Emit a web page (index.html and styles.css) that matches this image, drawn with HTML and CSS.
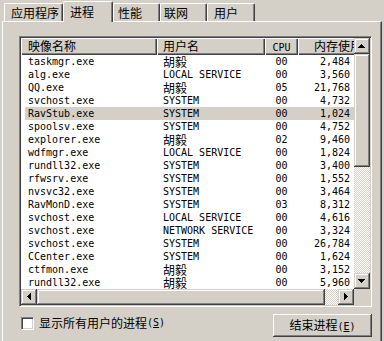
FILE: index.html
```html
<!DOCTYPE html>
<html lang="zh-CN">
  <head>
    <meta charset="UTF-8" />
    <meta name="viewport" content="width=device-width, initial-scale=1.0" />
    <title>Windows 任务管理器</title>
    <link rel="stylesheet" href="styles.css">
  </head>
  <body>
    <div class="tabs">
      <div class="tab tab-apps">应用程序</div>
      <div class="tab tab-proc active">进程</div>
      <div class="tab tab-perf">性能</div>
      <div class="tab tab-net">联网</div>
      <div class="tab tab-user">用户</div>
    </div>

    <div class="panel">
      <div class="list">
        <div class="list-main">
          <div class="view">
            <div class="head">
              <div class="col">映像名称</div>
              <div class="col">用户名</div>
              <div class="col col-cpu"><span class="en">CPU</span></div>
              <div class="col col-mem">内存使用</div>
            </div>
            <div class="row"><span class="name">taskmgr.exe</span><span class="user cn">胡毅</span><span class="cpu">00</span><span class="mem">2,484</span></div>
            <div class="row"><span class="name">alg.exe</span><span class="user">LOCAL SERVICE</span><span class="cpu">00</span><span class="mem">3,560</span></div>
            <div class="row"><span class="name">QQ.exe</span><span class="user cn">胡毅</span><span class="cpu">05</span><span class="mem">21,768</span></div>
            <div class="row"><span class="name">svchost.exe</span><span class="user">SYSTEM</span><span class="cpu">00</span><span class="mem">4,732</span></div>
            <div class="row sel"><span class="name">RavStub.exe</span><span class="user">SYSTEM</span><span class="cpu">00</span><span class="mem">1,024</span></div>
            <div class="row"><span class="name">spoolsv.exe</span><span class="user">SYSTEM</span><span class="cpu">00</span><span class="mem">4,752</span></div>
            <div class="row"><span class="name">explorer.exe</span><span class="user cn">胡毅</span><span class="cpu">02</span><span class="mem">9,460</span></div>
            <div class="row"><span class="name">wdfmgr.exe</span><span class="user">LOCAL SERVICE</span><span class="cpu">00</span><span class="mem">1,824</span></div>
            <div class="row"><span class="name">rundll32.exe</span><span class="user">SYSTEM</span><span class="cpu">00</span><span class="mem">3,400</span></div>
            <div class="row"><span class="name">rfwsrv.exe</span><span class="user">SYSTEM</span><span class="cpu">00</span><span class="mem">1,552</span></div>
            <div class="row"><span class="name">nvsvc32.exe</span><span class="user">SYSTEM</span><span class="cpu">00</span><span class="mem">3,464</span></div>
            <div class="row"><span class="name">RavMonD.exe</span><span class="user">SYSTEM</span><span class="cpu">03</span><span class="mem">8,312</span></div>
            <div class="row"><span class="name">svchost.exe</span><span class="user">LOCAL SERVICE</span><span class="cpu">00</span><span class="mem">4,616</span></div>
            <div class="row"><span class="name">svchost.exe</span><span class="user">NETWORK SERVICE</span><span class="cpu">00</span><span class="mem">3,324</span></div>
            <div class="row"><span class="name">svchost.exe</span><span class="user">SYSTEM</span><span class="cpu">00</span><span class="mem">26,784</span></div>
            <div class="row"><span class="name">CCenter.exe</span><span class="user">SYSTEM</span><span class="cpu">00</span><span class="mem">1,624</span></div>
            <div class="row"><span class="name">ctfmon.exe</span><span class="user cn">胡毅</span><span class="cpu">00</span><span class="mem">3,152</span></div>
            <div class="row"><span class="name">rundll32.exe</span><span class="user cn">胡毅</span><span class="cpu">00</span><span class="mem">5,960</span></div>
          </div>

          <div class="vscroll">
            <div class="sb-btn sb-v"><svg width="7" height="4" viewBox="0 0 7 4"><path d="M3 0h1v1H3zM2 1h3v1H2zM1 2h5v1H1zM0 3h7v1H0z" /></svg></div>
            <div class="sb-thumb thumb-v"></div>
            <div class="sb-track"></div>
            <div class="sb-btn sb-v"><svg width="7" height="4" viewBox="0 0 7 4"><path d="M0 0h7v1H0zM1 1h5v1H1zM2 2h3v1H2zM3 3h1v1H3z" /></svg></div>
          </div>
        </div>

        <div class="hscroll">
          <div class="sb-btn sb-h"><svg width="4" height="7" viewBox="0 0 4 7"><path d="M3 0h1v7H3zM2 1h1v5H2zM1 2h1v3H1zM0 3h1v1H0z" /></svg></div>
          <div class="sb-thumb thumb-h"></div>
          <div class="sb-track"></div>
          <div class="sb-btn sb-h"><svg width="4" height="7" viewBox="0 0 4 7"><path d="M0 0h1v7H0zM1 1h1v5H1zM2 2h1v3H2zM3 3h1v1H3z" /></svg></div>
          <div class="sb-corner"></div>
        </div>
      </div>

      <div class="actions">
        <label class="check"><span class="box"></span>显示所有用户的进程<span class="en">(<u>S</u>)</span></label>
        <button class="btn">结束进程<span class="en">(<u>E</u>)</span></button>
      </div>
    </div>
  </body>
</html>
```

FILE: styles.css
```css
/* 经典 Windows 配色 */
body {
  margin: 0;
  background: #d4d0c8;
  color: #000;
  font: 12px/14px "Noto Sans CJK SC", sans-serif;
  overflow: hidden;
}

.en {
  font-family: "DejaVu Sans Mono", monospace;
  font-size: 10px;
}

/* 选项卡 */
.tabs {
  display: flex;
  align-items: flex-end;
  height: 21px;
  padding-left: 4px;
}
.tab {
  box-sizing: border-box;
  height: 18px;
  padding: 2px 0 0 6px;
  border-top: 1px solid #fff;
  border-left: 1px solid #fff;
  border-right: 1px solid #404040;
  border-radius: 2px 2px 0 0;
  box-shadow: inset -1px 0 #808080;
  white-space: nowrap;
}
.tab.active {
  position: relative;
  z-index: 1;
  height: 21px;
  margin-bottom: -1px;
  padding-top: 3px;
  background: #d4d0c8;
}
.tab-apps { width: 59px; }
.tab-proc { width: 50px; padding-left: 6px; }
.tab-perf { width: 47px; padding-left: 4px; }
.tab-net { width: 47px; padding-left: 3px; }
.tab-user { width: 48px; padding-left: 6px; }

/* 选项卡内容 */
.panel {
  box-sizing: border-box;
  width: 380px;
  height: 320px;
  margin-left: 2px;
  padding: 14px 0 0 16px;
  border-top: 1px solid #fff;
  border-left: 1px solid #fff;
  border-right: 1px solid #404040;
  box-shadow: inset -1px 0 #808080;
}

/* 进程列表 */
.list {
  box-sizing: border-box;
  width: 353px;
  padding: 1px;
  border: 1px solid;
  border-color: #808080 #fff #fff #808080;
  box-shadow: inset 1px 1px #404040, inset -1px -1px #d4d0c8;
}
.list-main {
  display: flex;
  height: 251px;
}
.view {
  width: 333px;
  overflow: hidden;
  background: #fff;
}
.head,
.row {
  display: grid;
  grid-template-columns: 136px 108px 33px 70px;
  width: 347px;
}
.head {
  height: 17px;
}
.col {
  box-sizing: border-box;
  padding-left: 7px;
  line-height: 16px;
  white-space: nowrap;
  overflow: hidden;
  background: #d4d0c8;
  box-shadow: inset 1px 1px #fff, inset -1px -1px #404040, inset -2px -2px #808080;
}
.col + .col { padding-left: 6px; }
.col.col-cpu { padding-left: 0; text-align: center; }
.col.col-mem { padding: 0 6px 0 0; text-align: right; }

.row {
  height: 13px;
  font-family: "DejaVu Sans Mono", monospace;
  font-size: 10px;
  line-height: 13px;
  white-space: nowrap;
}
.row .cn {
  font-family: "Noto Sans CJK SC", sans-serif;
  font-size: 12px;
  line-height: 13px;
}
.row.sel {
  background: linear-gradient(to right, #fff 4px, #d4d0c8 4px);
}
.name { padding-left: 7px; }
.user { padding-left: 6px; }
.cpu { text-align: center; }
.mem { padding-right: 18px; text-align: right; }

/* 滚动条 */
.vscroll {
  display: flex;
  flex-direction: column;
  width: 16px;
}
.hscroll {
  display: flex;
  height: 16px;
}
.sb-btn,
.sb-thumb {
  box-sizing: border-box;
  background: #d4d0c8;
  box-shadow: inset -1px -1px #404040, inset 1px 1px #d4d0c8, inset -2px -2px #808080, inset 2px 2px #fff;
}
.sb-btn {
  width: 16px;
  height: 16px;
  flex: none;
}
.sb-btn svg {
  display: block;
  fill: #000;
}
.sb-v { padding: 6px 0 0 4px; }
.sb-h { padding: 4px 0 0 6px; }
.thumb-v { height: 113px; flex: none; }
.thumb-h { width: 288px; flex: none; }
.sb-track {
  flex: 1;
  background-image: conic-gradient(#fff 25%, #d4d0c8 0 50%, #fff 0 75%, #d4d0c8 0);
  background-size: 2px 2px;
}
.sb-corner {
  width: 16px;
  flex: none;
  background: #d4d0c8;
}

/* 底部 */
.actions {
  display: flex;
  align-items: flex-start;
  width: 353px;
  margin-top: 7px;
}
.check {
  display: flex;
  align-items: center;
  margin: 2px 0 0 2px;
  white-space: nowrap;
}
.box {
  box-sizing: border-box;
  width: 13px;
  height: 13px;
  margin-right: 5px;
  background: #fff;
  border: 1px solid;
  border-color: #808080 #fff #fff #808080;
  box-shadow: inset 1px 1px #404040, inset -1px -1px #d4d0c8;
}
.btn {
  width: 99px;
  height: 23px;
  margin-left: auto;
  padding: 0;
  border: 0;
  background: #d4d0c8;
  color: #000;
  font: inherit;
  box-shadow: inset -1px -1px #404040, inset 1px 1px #fff, inset -2px -2px #808080;
}
```
